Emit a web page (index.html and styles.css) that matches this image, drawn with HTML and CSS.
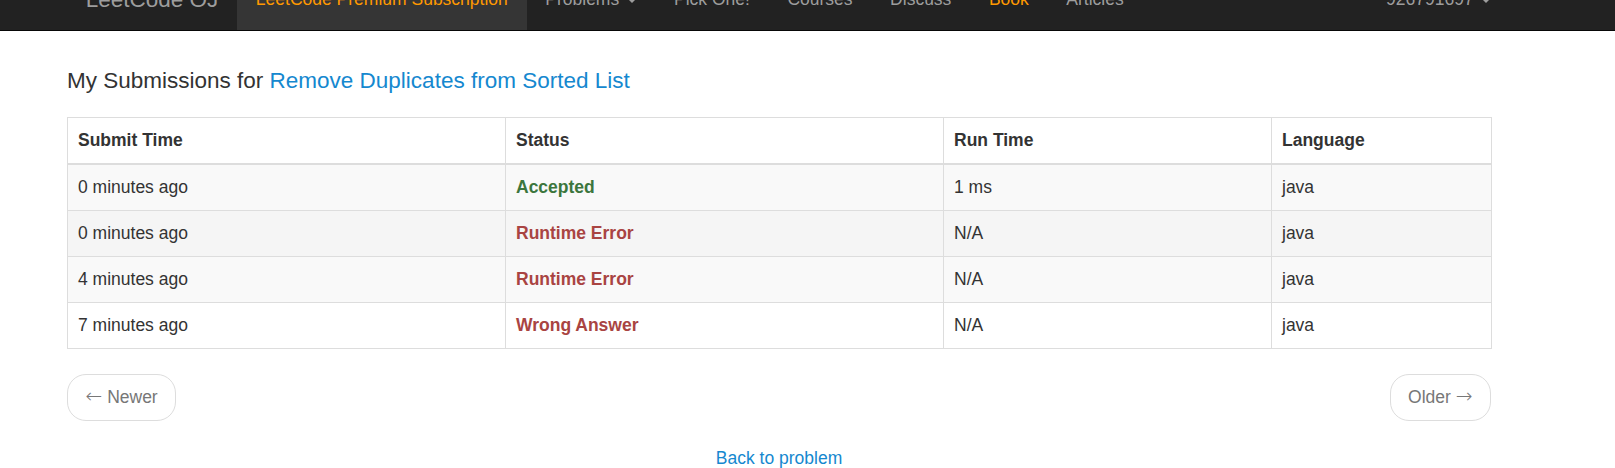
FILE: index.html
```html
<!DOCTYPE html>
<html lang="en">
<head>
<meta charset="utf-8">
<title>My Submissions - LeetCode OJ</title>
<link rel="stylesheet" href="styles.css">
</head>
<body>
<nav class="navbar">
  <div class="container nav-inner">
    <a class="brand" href="#">LeetCode OJ</a>
    <ul class="nav">
      <li class="active"><a class="orange" href="#">LeetCode Premium Subscription</a></li>
      <li><a href="#">Problems <span class="caret"></span></a></li>
      <li><a href="#">Pick One!</a></li>
      <li><a href="#">Courses</a></li>
      <li><a href="#">Discuss</a></li>
      <li><a class="orange" href="#">Book</a></li>
      <li><a href="#">Articles</a></li>
    </ul>
    <ul class="nav nav-right">
      <li><a href="#">926791697 <span class="caret"></span></a></li>
    </ul>
  </div>
</nav>

<main class="container">
  <h4 class="title">My Submissions for <a href="#">Remove Duplicates from Sorted List</a></h4>

  <table class="subs">
    <colgroup>
      <col class="c1"><col class="c2"><col class="c3"><col class="c4">
    </colgroup>
    <thead>
      <tr><th>Submit Time</th><th>Status</th><th>Run Time</th><th>Language</th></tr>
    </thead>
    <tbody>
      <tr class="odd"><td>0 minutes ago</td><td><a class="st ok" href="#">Accepted</a></td><td>1 ms</td><td>java</td></tr>
      <tr class="hover"><td>0 minutes ago</td><td><a class="st err" href="#">Runtime Error</a></td><td>N/A</td><td>java</td></tr>
      <tr class="odd"><td>4 minutes ago</td><td><a class="st err" href="#">Runtime Error</a></td><td>N/A</td><td>java</td></tr>
      <tr><td>7 minutes ago</td><td><a class="st err" href="#">Wrong Answer</a></td><td>N/A</td><td>java</td></tr>
    </tbody>
  </table>

  <ul class="pager">
    <li><a href="#"><span class="arrow">&larr;</span> Newer</a></li>
    <li><a href="#">Older <span class="arrow">&rarr;</span></a></li>
  </ul>

  <p class="back"><a href="#">Back to problem</a></p>
</main>
</body>
</html>
```
FILE: styles.css
```css
html, body {
  margin: 0;
  padding: 0;
  background: #fff;
}
body {
  font-family: "Liberation Sans", Arial, Helvetica, sans-serif;
  font-size: 17.5px;
  line-height: 25px;
  color: #333;
  overflow: hidden;
}
a {
  text-decoration: none;
  color: #1588cf;
}
.container {
  width: 1424px;
  margin-left: 67px;
}

/* navbar */
.navbar {
  margin-top: -32px;
  height: 62px;
  background: #222;
  border-bottom: 1px solid #080808;
}
.nav-inner {
  display: flex;
  height: 62px;
}
.brand {
  display: block;
  padding: 19px 18.75px 0 18.75px;
  font-size: 22.5px;
  line-height: 25px;
  color: #9d9d9d;
}
.nav {
  display: flex;
  margin: 0;
  padding: 0;
  list-style: none;
}
.nav li a {
  display: block;
  height: 62px;
  box-sizing: border-box;
  padding: 19px 18.75px 0 18.75px;
  color: #9d9d9d;
}
.nav li.active a {
  background: #353535;
}
.nav li a.orange {
  color: #f90;
}
.nav-right {
  margin-left: auto;
  margin-right: -18.75px;
}
.caret {
  display: inline-block;
  width: 0;
  height: 0;
  margin-left: 2.5px;
  vertical-align: middle;
  border-top: 5px solid;
  border-left: 5px solid transparent;
  border-right: 5px solid transparent;
}

/* title */
.title {
  margin: 25px 0 24px;
  padding-top: 12.5px;
  font-size: 22.5px;
  font-weight: normal;
  line-height: 24.75px;
}

/* table */
.subs {
  width: 1424px;
  table-layout: fixed;
  border-collapse: collapse;
  border: 1px solid #ddd;
  margin-bottom: 25px;
}
.c1 { width: 438px; }
.c2 { width: 438px; }
.c3 { width: 328px; }
.c4 { width: 220px; }
.subs th, .subs td {
  padding: 10px;
  border: 1px solid #ddd;
  text-align: left;
  vertical-align: top;
  line-height: 25px;
}
.subs th {
  font-weight: bold;
  border-bottom: 2px solid #ddd;
}
.subs tr.odd { background: #f9f9f9; }
.subs tr.hover { background: #f5f5f5; }
.st { font-weight: bold; }
.st.ok { color: #3c763d; }
.st.err { color: #a94442; }

/* pager */
.pager {
  display: flex;
  justify-content: space-between;
  list-style: none;
  margin: 0 0 25px;
  padding: 0;
}
.pager a {
  display: inline-block;
  height: 47px;
  box-sizing: border-box;
  padding: 10px 17.5px;
  border: 1px solid #ddd;
  border-radius: 19px;
  color: #777;
  background: #fff;
}
.arrow {
  font-family: "DejaVu Sans", sans-serif;
  font-weight: 200;
  font-size: 20px;
  line-height: 0;
}
.back {
  margin: 0;
  text-align: center;
}
```
